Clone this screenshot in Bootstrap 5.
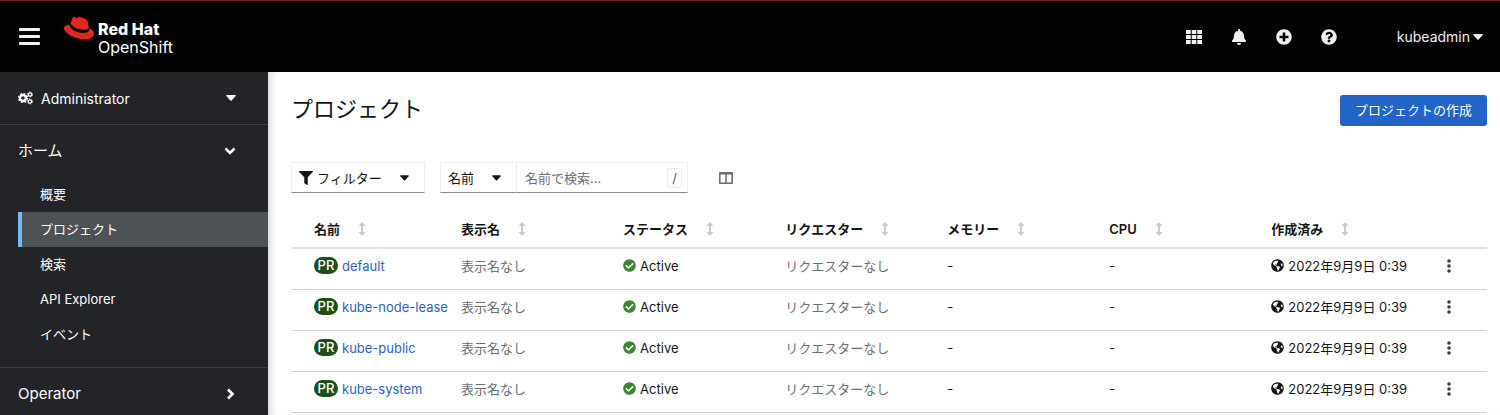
<!DOCTYPE html>
<html lang="ja">
<head>
<meta charset="utf-8">
<meta name="viewport" content="width=device-width, initial-scale=1">
<title>プロジェクト · Red Hat OpenShift</title>
<link href="https://cdn.jsdelivr.net/npm/bootstrap@5.3.0/dist/css/bootstrap.min.css" rel="stylesheet">
<style>
  body { font-family: Inter, "Noto Sans CJK JP", sans-serif; font-size: 13px; line-height: 20px; color: #151515; }
  svg { fill: currentColor; display: block; flex: none; }
  .masthead { height: 72px; background: #030303; border-top: 1px solid #6d1f16; padding: 0 17px 0 18px; }
  .masthead .btn { color: #f0f0f0; }
  .brand-text { font-size: 16px; line-height: 18px; padding-top: 7px; }
  .brand-text strong { font-weight: 800; }
  .tools { gap: 29px; margin-right: 60px; }
  .user-menu { font-size: 14px; gap: 3px; }
  .side { width: 268px; background: #222427; color: #fff; }
  .side .btn { color: #fff; }
  .side-row { height: 52px; padding: 0 32px 0 18px; font-size: 15px; }
  .side-line { border-bottom: 1px solid #3c3f42; }
  .perspective { height: 53px; font-size: 14px; }
  .side-sub { padding: 0 0 15px 18px; }
  .side-sub a { display: block; height: 35px; line-height: 35px; padding-left: 18px; border-left: 4px solid transparent; color: #fff; text-decoration: none; }
  .side-sub a.active { background: #4f5255; border-left-color: #73bcf7; }
  .content { box-shadow: inset 8px 0 8px -6px #d2d2d2; padding: 23px 13px 0 23px; }
  .page-title { font-size: 22px; line-height: 28px; font-weight: 400; }
  .content .btn-create { background: #2264c8; color: #fff; border-radius: 3px; font-size: 13px; line-height: 19px; padding: 6px 15px; border: 0; }
  .control { height: 31px; border: 1px solid #ededed; border-bottom-color: #8a8d90; background: #fff; padding: 0 7px; font-size: 13px; line-height: 18px; color: #151515; }
  .toolbar { margin-top: 36px; gap: 15px; }
  .filter { width: 134px; }
  .attr { width: 77px; }
  .search { width: 172px; margin-left: -1px; padding-left: 8px; padding-right: 5px; }
  .search input { width: 120px; border: 0; outline: 0; background: transparent; padding: 0; }
  .search input::placeholder { color: #6a6e73; opacity: 1; }
  .key { border: 1px solid #ededed; border-radius: 3px; background: #fff; color: #4f5255; font: inherit; line-height: 18px; padding: 0 4px; }
  .projects { table-layout: fixed; margin-top: 17px; --bs-table-color: #151515; }
  .projects th, .projects td { padding: 0 8px; height: 41px; border-bottom: 1px solid #d2d2d2; white-space: nowrap; vertical-align: middle; }
  .projects thead th { height: 38px; border-bottom: 2px solid #e3e3e3; font-weight: 600; }
  .projects tr > :first-child { padding-left: 23px; padding-right: 0; }
  .projects tr > :last-child { padding-left: 22px; }
  .projects .cell { display: flex; align-items: center; height: 20px; margin-bottom: 6px; }
  .projects thead .cell { gap: 18px; margin-bottom: 0; }
  .projects a { color: #2b63c4; text-decoration: none; }
  .kebab { height: 20px; margin-bottom: 6px; }
  .content .kebab { color: #3c3f42; }
  .kind { flex: none; background: #1e4f18; color: #fff; font-weight: 500; border-radius: 9px; width: 24px; height: 17px; line-height: 17px; text-align: center; margin-right: 4px; }
  .c-main { width: 13.55%; }
  .soft, .btn.soft { color: #6a6e73; }
  .sort { color: #cacaca; }
</style>
</head>
<body>
<svg class="d-none" aria-hidden="true">
  <symbol id="caret" viewBox="0 0 10 6"><path d="M.8 0h8.400q1 .2.4 1L5.700 5.400q-.7.7-1.400 0L.4 1Q-.2.2.8 0z"/></symbol>
  <symbol id="sort" viewBox="0 0 8 14"><path d="M4 0l3.500 4H5v6h2.500L4 14 .5 10H3V4H.5z"/></symbol>
  <symbol id="ok" viewBox="0 0 512 512"><path d="M504 256c0 136.967-111.033 248-248 248S8 392.967 8 256 119.033 8 256 8s248 111.033 248 248zM227.314 387.314l184-184c6.248-6.248 6.248-16.379 0-22.627l-22.627-22.627c-6.248-6.249-16.379-6.249-22.628 0L216 308.118l-70.059-70.059c-6.248-6.248-16.379-6.248-22.628 0l-22.627 22.627c-6.248 6.248-6.248 16.379 0 22.627l104 104c6.249 6.249 16.379 6.249 22.628.001z"/></symbol>
  <symbol id="globe" viewBox="0 0 496 512"><path d="M248 8C111.030 8 0 119.030 0 256s111.030 248 248 248 248-111.030 248-248S384.970 8 248 8zm82.290 357.600c-3.900 3.880-7.990 7.950-11.310 11.280-2.990 3-5.100 6.700-6.170 10.710-1.510 5.660-2.730 11.380-4.770 16.870l-17.390 46.850c-13.760 3-28 4.690-42.650 4.690v-27.380c1.690-12.620-7.640-36.260-22.630-51.250-6-6-9.370-14.140-9.370-22.630v-32.010c0-11.640-6.270-22.340-16.460-27.970-14.370-7.950-34.810-19.060-48.810-26.110-11.480-5.780-22.100-13.140-31.650-21.750l-.8-.72a114.790 114.790 0 0 1-18.060-20.740c-9.380-13.770-24.660-36.420-34.590-51.140 20.470-45.500 57.360-82.040 103.200-101.890l24.010 12.010C203.480 89.740 216 82.010 216 70.110v-11.300c7.990-1.290 16.120-2.110 24.390-2.420l28.300 28.300c6.250 6.250 6.250 16.380 0 22.630L264 112l-10.340 10.340c-3.120 3.120-3.120 8.190 0 11.310l4.690 4.690c3.120 3.120 3.120 8.190 0 11.310l-8 8a8 8 0 0 1-5.660 2.340h-8.990c-2.080 0-4.080.81-5.580 2.270l-9.920 9.650a8 8 0 0 0-1.580 9.310l15.590 31.190c2.660 5.320-1.210 11.580-7.150 11.580h-5.640c-1.930 0-3.790-.7-5.240-1.960l-9.280-8.060a16 16 0 0 0-15.550-3.100l-31.170 10.390a11.950 11.950 0 0 0-8.170 11.340c0 4.530 2.560 8.660 6.610 10.690l11.080 5.540c9.410 4.710 19.790 7.160 30.310 7.160s22.590 27.290 32 32h66.750c8.490 0 16.620 3.370 22.630 9.370l13.690 13.690a30.500 30.500 0 0 1 8.930 21.570 46.540 46.540 0 0 1-13.720 32.980zM417 274.250c-5.790-1.450-10.840-5-14.150-9.970l-17.980-26.970a23.970 23.970 0 0 1 0-26.620l19.590-29.380c2.320-3.470 5.500-6.290 9.240-8.150l12.980-6.490C440.200 193.590 448 223.870 448 256c0 8.670-.74 17.160-1.820 25.540L417 274.250z"/></symbol>
  <symbol id="kebab" viewBox="0 0 4 14"><circle cx="2" cy="2" r="1.800"/><circle cx="2" cy="7" r="1.800"/><circle cx="2" cy="12" r="1.800"/></symbol>
</svg>

<div class="d-flex flex-column vh-100 overflow-hidden">
  <header class="masthead d-flex align-items-center flex-shrink-0">
    <button class="btn p-0 border-0 rounded-0" type="button" aria-label="ナビゲーション">
      <svg width="22" height="20" viewBox="0 0 22 20"><rect x="1" y="1" width="21" height="3" rx="1"/><rect x="1" y="8" width="21" height="3" rx="1"/><rect x="1" y="15" width="21" height="3" rx="1"/></svg>
    </button>
    <a class="d-flex text-white text-decoration-none ms-4 mb-1" href="#">
      <svg class="me-1" width="30" height="30" viewBox="0 0 24 24" style="color:#e0281c"><path d="M16.009 13.386c1.577 0 3.860-.326 3.860-2.202a1.765 1.765 0 0 0-.04-.431l-.94-4.080c-.216-.898-.406-1.305-1.982-2.093-1.223-.625-3.888-1.658-4.676-1.658-.733 0-.947.946-1.822.946-.842 0-1.467-.706-2.255-.706-.757 0-1.250.515-1.630 1.576 0 0-1.060 2.990-1.197 3.424a.81.81 0 0 0-.028.245c0 1.162 4.577 4.974 10.710 4.974m4.101-1.435c.218 1.032.218 1.140.218 1.277 0 1.765-1.984 2.745-4.593 2.745-5.895.004-11.060-3.451-11.060-5.734a2.326 2.326 0 0 1 .19-.925C2.746 9.415 0 9.794 0 12.217c0 3.969 9.405 8.861 16.851 8.861 5.710 0 7.149-2.582 7.149-4.620 0-1.605-1.387-3.425-3.887-4.512"/></svg>
      <span class="brand-text d-flex flex-column"><strong>Red Hat</strong><span>OpenShift</span></span>
    </a>
    <div class="tools d-flex align-items-center ms-auto">
      <button class="btn p-0 border-0" type="button" aria-label="アプリケーション"><svg width="16" height="16" viewBox="0 0 16 16"><path d="M0 1h4.700v4H0zM5.700 1h4.600v4H5.700zM11.300 1H16v4h-4.700zM0 6h4.700v4H0zM5.700 6h4.600v4H5.700zM11.300 6H16v4h-4.700zM0 11h4.700v4H0zM5.700 11h4.600v4H5.700zM11.300 11H16v4h-4.700z"/></svg></button>
      <button class="btn p-0 border-0" type="button" aria-label="通知"><svg width="16" height="16" viewBox="-32 0 512 512"><path d="M224 512c35.320 0 63.970-28.650 63.970-64H160.030c0 35.350 28.650 64 63.970 64zm215.390-149.710c-19.320-20.760-55.470-51.990-55.470-154.290 0-77.700-54.480-139.900-127.940-155.160V32c0-17.670-14.320-32-31.980-32s-31.980 14.330-31.980 32v20.840C118.560 68.100 64.080 130.300 64.080 208c0 102.300-36.150 133.530-55.470 154.290-6 6.450-8.660 14.160-8.610 21.710.11 16.400 12.980 32 32.100 32h383.800c19.120 0 32-15.600 32.100-32 .05-7.550-2.610-15.270-8.610-21.710z"/></svg></button>
      <button class="btn p-0 border-0" type="button" aria-label="追加"><svg width="16" height="16" viewBox="0 0 512 512"><path d="M256 8C119 8 8 119 8 256s111 248 248 248 248-111 248-248S393 8 256 8zm144 276c0 6.600-5.400 12-12 12h-92v92c0 6.600-5.400 12-12 12h-56c-6.600 0-12-5.400-12-12v-92h-92c-6.600 0-12-5.400-12-12v-56c0-6.600 5.400-12 12-12h92v-92c0-6.600 5.400-12 12-12h56c6.600 0 12 5.400 12 12v92h92c6.600 0 12 5.400 12 12v56z"/></svg></button>
      <button class="btn p-0 border-0" type="button" aria-label="ヘルプ"><svg width="16" height="16" viewBox="0 0 512 512"><path d="M504 256c0 136.997-111.043 248-248 248S8 392.997 8 256C8 119.083 119.043 8 256 8s248 111.083 248 248zM262.655 90c-54.497 0-89.255 22.957-116.549 63.758-3.536 5.286-2.353 12.415 2.715 16.258l34.699 26.310c5.205 3.947 12.621 3.008 16.665-2.122 17.864-22.658 30.113-35.797 57.303-35.797 20.429 0 45.698 13.148 45.698 32.958 0 14.976-12.363 22.667-32.534 33.976C247.128 238.528 216 254.941 216 296v4c0 6.627 5.373 12 12 12h56c6.627 0 12-5.373 12-12v-1.333c0-28.462 83.186-29.647 83.186-106.667 0-58.002-60.165-102-116.531-102zM256 338c-25.365 0-46 20.635-46 46 0 25.364 20.635 46 46 46s46-20.636 46-46c0-25.365-20.635-46-46-46z"/></svg></button>
    </div>
    <button class="user-menu btn p-0 border-0 d-flex align-items-center" type="button">kubeadmin<svg width="10" height="6"><use href="#caret"/></svg></button>
  </header>

  <div class="d-flex flex-grow-1 overflow-hidden">
    <nav class="side flex-shrink-0 overflow-hidden" aria-label="メイン">
      <button class="side-row perspective side-line btn rounded-0 border-top-0 border-start-0 border-end-0 w-100 d-flex align-items-center" type="button">
        <svg class="me-2" width="15" height="14" viewBox="0 0 15 14"><g fill="none" stroke="currentColor"><circle cx="5" cy="7" r="3" stroke-width="2.400"/><circle cx="5" cy="7" r="4.400" stroke-width="1.400" stroke-dasharray="1.900 1.556"/><circle cx="12" cy="3.500" r="1.700" stroke-width="1.300"/><circle cx="12" cy="3.500" r="2.500" stroke-width=".9" stroke-dasharray="1.300 1.318"/><circle cx="12" cy="10.500" r="1.700" stroke-width="1.300"/><circle cx="12" cy="10.500" r="2.500" stroke-width=".9" stroke-dasharray="1.300 1.318"/></g></svg>
        Administrator
        <svg class="ms-auto" width="10" height="6"><use href="#caret"/></svg>
      </button>
      <button class="side-row btn border-0 rounded-0 w-100 d-flex align-items-center justify-content-between" type="button">ホーム
        <svg width="12" height="8" viewBox="0 0 12 8"><path d="M1.500 1.500L6 6l4.500-4.500" fill="none" stroke="currentColor" stroke-width="2.600"/></svg>
      </button>
      <div class="side-sub side-line">
        <a href="#">概要</a>
        <a href="#" class="active" aria-current="page">プロジェクト</a>
        <a href="#">検索</a>
        <a href="#">API Explorer</a>
        <a href="#">イベント</a>
      </div>
      <button class="side-row btn border-0 rounded-0 w-100 d-flex align-items-center justify-content-between" type="button">Operator
        <svg width="12" height="12" viewBox="0 0 12 12"><path d="M4 1.500L8.500 6 4 10.500" fill="none" stroke="currentColor" stroke-width="2.600"/></svg>
      </button>
    </nav>

    <main class="content flex-grow-1 overflow-hidden">
      <div class="d-flex justify-content-between align-items-start">
        <h1 class="page-title mb-0">プロジェクト</h1>
        <button class="btn btn-create" type="button">プロジェクトの作成</button>
      </div>
      <div class="toolbar d-flex align-items-center">
        <button class="control filter d-flex align-items-center" type="button">
          <svg class="me-1" width="14" height="14" viewBox="0 0 512 512"><path d="M487.976 0H24.028C2.710 0-8.047 25.866 7.058 40.971L192 225.941V432c0 7.831 3.821 15.170 10.237 19.662l80 55.980C298.020 518.690 320 507.493 320 487.980V225.941l184.947-184.970C520.021 25.896 509.338 0 487.976 0z"/></svg>
          フィルター
          <svg class="ms-auto me-2" width="9" height="6"><use href="#caret"/></svg>
        </button>
        <div class="d-flex">
          <button class="control attr d-flex align-items-center justify-content-between" type="button">名前<svg class="me-2" width="9" height="6"><use href="#caret"/></svg></button>
          <div class="control search d-flex align-items-center justify-content-between">
            <input type="text" placeholder="名前で検索..." aria-label="名前で検索">
            <kbd class="key">/</kbd>
          </div>
        </div>
        <button class="btn p-0 border-0 ms-3 soft" type="button" aria-label="列の管理"><svg width="14" height="12" viewBox="0 0 14 12"><path fill-rule="evenodd" d="M1 0h12q1 0 1 1v10q0 1-1 1H1q-1 0-1-1V1q0-1 1-1zm.6 2.500v7.900h4.600V2.500zm6.200 0v7.900h4.600V2.500z"/></svg></button>
      </div>

      <table class="projects table">
        <colgroup><col class="c-main"><col class="c-main"><col class="c-main"><col class="c-main"><col class="c-main"><col class="c-main"><col class="c-main"><col></colgroup>
        <thead><tr id="head"></tr></thead>
        <tbody id="rows"></tbody>
      </table>
    </main>
  </div>
</div>

<script src="https://cdn.jsdelivr.net/npm/bootstrap@5.3.0/dist/js/bootstrap.bundle.min.js"></script>
<script>
  document.getElementById('head').innerHTML =
    ['名前', '表示名', 'ステータス', 'リクエスター', 'メモリー', 'CPU', '作成済み'].map(t =>
      `<th scope="col"><div class="cell">${t}<svg class="sort" width="8" height="14"><use href="#sort"/></svg></div></th>`).join('') + '<th></th>';
  document.getElementById('rows').innerHTML =
    ['default', 'kube-node-lease', 'kube-public', 'kube-system'].map(n => `<tr>
      <td><div class="cell"><span class="kind">PR</span><a href="#">${n}</a></div></td>
      <td><div class="cell soft">表示名なし</div></td>
      <td><div class="cell"><svg class="me-1" width="13" height="13" style="color:#3e8635"><use href="#ok"/></svg>Active</div></td>
      <td><div class="cell soft">リクエスターなし</div></td>
      <td><div class="cell">-</div></td>
      <td><div class="cell">-</div></td>
      <td><div class="cell"><svg class="me-1" width="13" height="13"><use href="#globe"/></svg>2022年9月9日 0:39</div></td>
      <td><button class="kebab btn p-0 border-0 d-flex align-items-center" type="button" aria-label="操作"><svg width="4" height="14"><use href="#kebab"/></svg></button></td>
    </tr>`).join('');
</script>
</body>
</html>
